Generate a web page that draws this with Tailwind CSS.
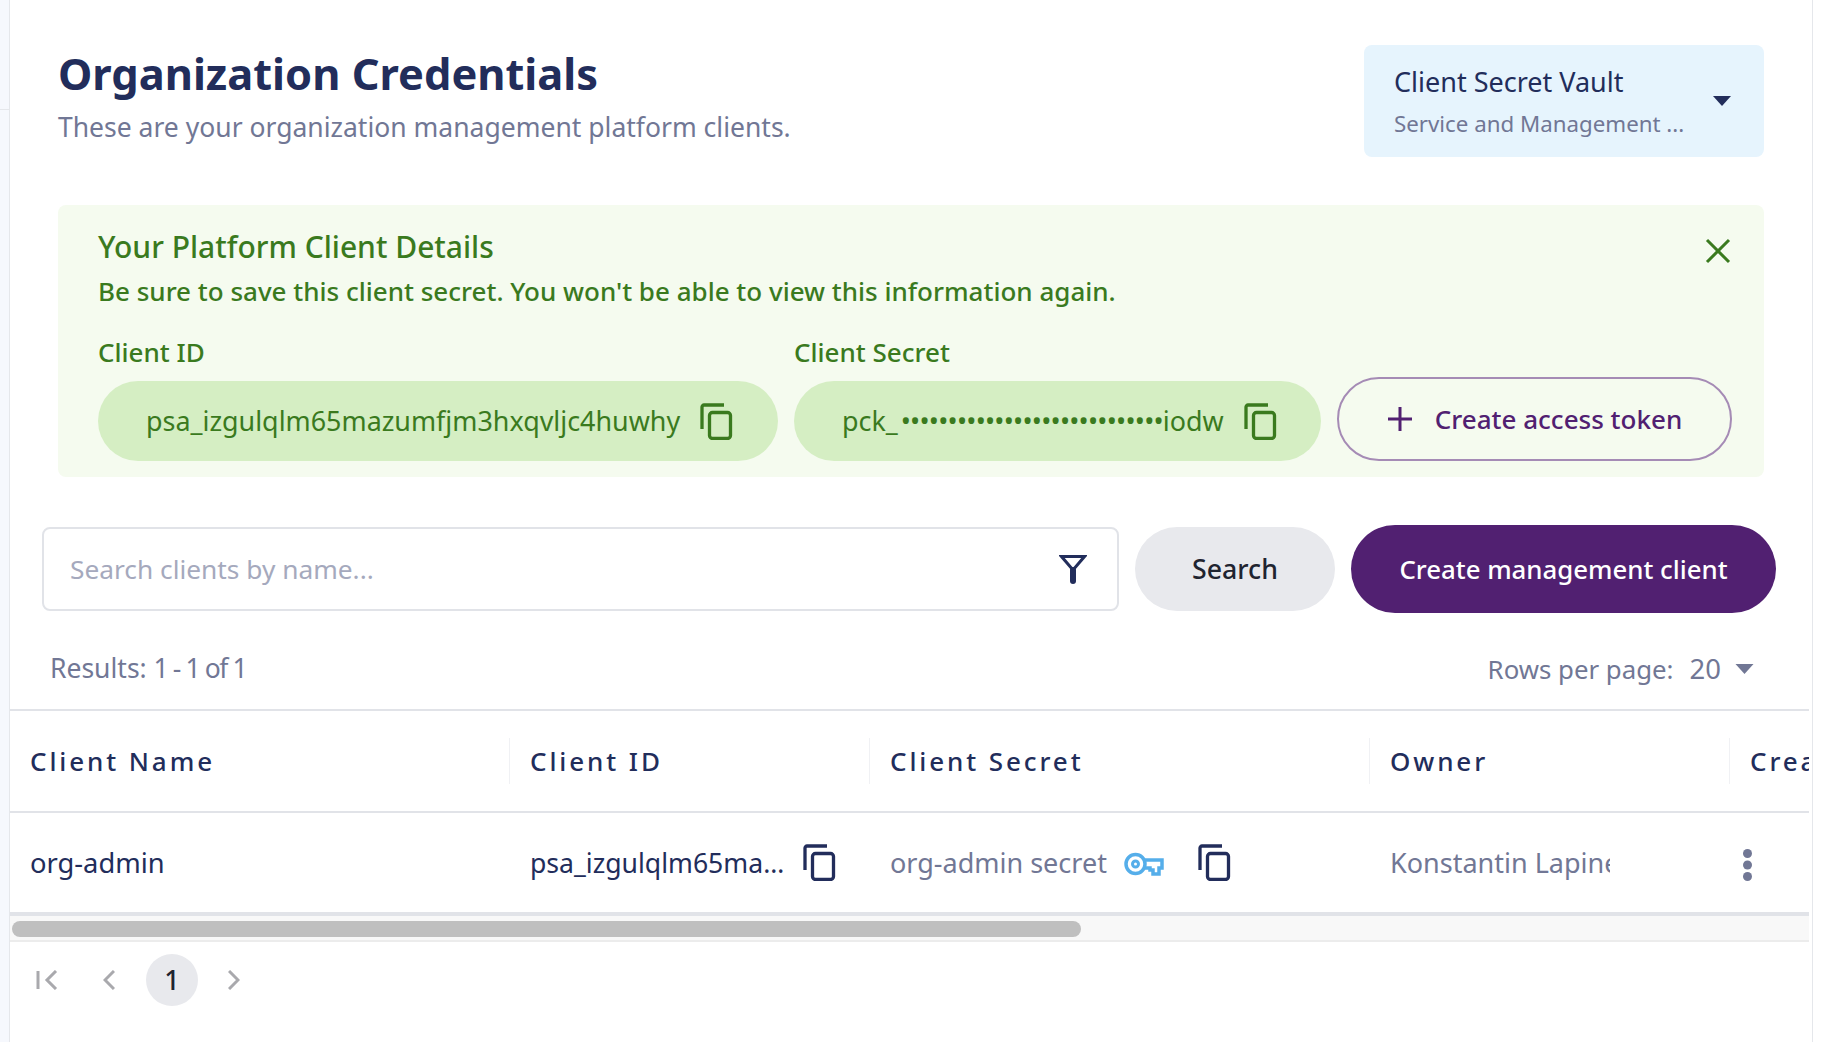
<!DOCTYPE html>
<html lang="en">
<head>
<meta charset="utf-8">
<title>Organization Credentials</title>
<script src="https://cdn.jsdelivr.net/npm/@tailwindcss/browser@4"></script>
</head>
<body class="m-0 bg-white">
<svg width="0" height="0" class="absolute">
  <defs>
    <g id="copy" fill="none" stroke="currentColor" stroke-width="3.300">
      <path d="M24 2H4a2 2 0 0 0-2 2v22"/>
      <rect x="9.500" y="9.500" width="21" height="26" rx="3"/>
    </g>
  </defs>
</svg>
<div class="flex w-[1822px] h-[1042px] overflow-hidden font-['Noto_Sans',sans-serif]">
  <aside class="w-[10px] shrink-0 bg-[#f6f8fd] border-r border-[#e5e7eb]">
    <div class="h-[110px] border-b border-[#e5e7eb]"></div>
  </aside>
  <main class="flex-1 min-w-0 flex flex-col">
    <div class="flex flex-col pl-[48px] pr-[48px] pt-[45px]">
      <header class="flex justify-between items-start h-[112px]">
        <div class="pt-[5px]">
          <h1 class="text-[43.400px] leading-[48px] font-bold text-[#222d5b]">Organization Credentials</h1>
          <p class="text-[26.500px] leading-[34px] mt-[12px] text-[#717795]">These are your organization management platform clients.</p>
        </div>
        <div class="w-[400px] h-[112px] rounded-lg bg-[#e6f4fd] pl-[30px] pr-[33px] flex items-center justify-between">
          <div class="pt-[2px]">
            <div class="text-[27px] leading-[34px] text-[#222d5b]">Client Secret Vault</div>
            <div class="text-[22.300px] leading-[30px] mt-[10px] text-[#717795]">Service and Management ...</div>
          </div>
          <svg width="18" height="10" viewBox="0 0 18 10" class="text-[#222d5b]"><path d="M0 0h18L9 10z" fill="currentColor"/></svg>
        </div>
      </header>
      <section class="relative mt-[48px] h-[272px] rounded-lg bg-[#f5fbef] pl-[40px] pr-[32px] pt-[23px] text-[#3a7a1e]">
        <h2 class="text-[30px] leading-[38px] font-medium">Your Platform Client Details</h2>
        <p class="text-[26px] leading-[34px] mt-[8px] font-medium">Be sure to save this client secret. You won't be able to view this information again.</p>
        <button class="absolute right-[33px] top-[33px] w-[26px] h-[26px]" aria-label="Close">
          <svg width="26" height="26" viewBox="0 0 26 26" fill="none" stroke="currentColor" stroke-width="3"><path d="M2 2l22 22M24 2L2 24"/></svg>
        </button>
        <div class="flex mt-[29px] items-end">
          <div class="w-[680px]">
            <div class="text-[26px] leading-[30px] font-medium">Client ID</div>
            <div class="mt-[14px] h-[80px] rounded-full bg-[#d5eec3] pl-[48px] flex items-center gap-[20px] text-[26.900px]">
              <span>psa_izgulqlm65mazumfjm3hxqvljc4huwhy</span>
              <svg width="33" height="37" viewBox="0 0 33 37"><use href="#copy"/></svg>
            </div>
          </div>
          <div class="w-[527px] ml-[16px]">
            <div class="text-[26px] leading-[30px] font-medium">Client Secret</div>
            <div class="mt-[14px] h-[80px] rounded-full bg-[#d5eec3] pl-[48px] flex items-center gap-[20px] text-[26.900px]">
              <span>pck_<span class="tracking-[-0.750px] ml-[3px]">••••••••••••••••••••••••••••</span>iodw</span>
              <svg width="33" height="37" viewBox="0 0 33 37"><use href="#copy"/></svg>
            </div>
          </div>
          <button class="ml-[16px] w-[395px] h-[84px] rounded-full border-2 border-[#a58bb5] flex items-center justify-center gap-[22px] text-[26px] font-medium text-[#512071]">
            <svg width="26" height="26" viewBox="0 0 26 26" fill="none" stroke="currentColor" stroke-width="3"><path d="M13 1v24M1 13h24"/></svg>
            Create access token
          </button>
        </div>
      </section>
    </div>
    <div class="flex items-center pl-[32px] pr-[36px] mt-[48px] h-[88px]">
      <div class="w-[1077px] h-[84px] rounded-lg border-2 border-[#e1e3e8] flex items-center justify-between pl-[26px] pr-[30px] text-[26.300px] text-[#a5a9bd]">
        <span class="pt-[2px]">Search clients by name...</span>
        <svg width="28" height="30" viewBox="0 0 28 30" fill="none" stroke="#222d5b"><path d="M2.500 2.500h23L14 16z" stroke-width="3" stroke-linejoin="miter"/><path d="M14 16v11" stroke-width="6" stroke-linecap="round"/></svg>
      </div>
      <button class="ml-[16px] w-[200px] h-[84px] rounded-full bg-[#e8e9ed] text-[26.700px] font-medium text-[#1f2430]">Search</button>
      <button class="ml-[16px] w-[425px] h-[88px] rounded-full bg-[#512071] text-[25.800px] font-medium text-white">Create management client</button>
    </div>
    <div class="flex justify-between items-center h-[96px] pt-[15px] pl-[40px] pr-[58px] text-[26.500px] text-[#717795]">
      <span>Results: <span class="tracking-[-1.400px]">1 - 1 of 1</span></span>
      <div class="flex items-center">
        <div class="flex items-baseline">
          <span class="text-[25.800px]">Rows per page:</span>
          <span class="ml-[16px] text-[27.500px]">20</span>
        </div>
        <svg width="19" height="10" viewBox="0 0 18 10" class="ml-[14px]"><path d="M0 0h18L9 10z" fill="currentColor"/></svg>
      </div>
    </div>
    <div class="mr-[3px] overflow-hidden border-t-2 border-[#e1e3e8]">
      <div class="flex h-[102px] items-center border-b-2 border-[#e1e3e8] w-[2400px] text-[26px] font-medium tracking-[2.900px] text-[#222d5b]">
        <div class="w-[500px] h-[46px] pl-[20px] flex items-center border-r border-[#f0f1f4]">Client Name</div>
        <div class="w-[360px] h-[46px] pl-[20px] flex items-center border-r border-[#f0f1f4]">Client ID</div>
        <div class="w-[500px] h-[46px] pl-[20px] flex items-center border-r border-[#f0f1f4]">Client Secret</div>
        <div class="w-[360px] h-[46px] pl-[20px] flex items-center border-r border-[#f0f1f4]">Owner</div>
        <div class="pl-[20px]">Created</div>
      </div>
      <div class="flex h-[103px] items-center w-[1799px] text-[27px] border-b-4 border-[#e1e3e8]">
        <div class="w-[500px] pl-[20px] pt-[2px] text-[#222d5b] text-[27.300px]">org-admin</div>
        <div class="w-[360px] pl-[20px] flex items-center text-[#222d5b]">
          <span class="w-[256px] pt-[2px] truncate text-[26.600px]">psa_izgulqlm65mazumfjm3hxqvljc4huwhy</span>
          <svg width="33" height="37" viewBox="0 0 33 37" class="ml-[17px] shrink-0"><use href="#copy"/></svg>
        </div>
        <div class="w-[500px] pl-[20px] flex items-center text-[#717795]">
          <span class="shrink-0 pt-[2px]">org-admin secret</span>
          <svg width="40" height="24" viewBox="0 0 40 24" fill="none" stroke="#55aeea" stroke-width="3.500" class="ml-[17px] mt-[3px] shrink-0"><circle cx="11.500" cy="12" r="9.500"/><circle cx="11.500" cy="12" r="3" stroke-width="3"/><path d="M21 8h17v8h-3v6h-6v-4h-3v-2h-5"/></svg>
          <svg width="33" height="37" viewBox="0 0 33 37" class="ml-[34px] shrink-0 text-[#222d5b]"><use href="#copy"/></svg>
        </div>
        <div class="w-[360px] pl-[20px] pt-[2px] text-[#717795]"><span class="block w-[220px] overflow-hidden whitespace-nowrap">Konstantin Lapine</span></div>
        <div class="w-[59px] flex justify-start pl-[13px] pt-[4px]">
          <svg width="9" height="32" viewBox="0 0 9 32" fill="#717795"><circle cx="4.500" cy="4.500" r="4.500"/><circle cx="4.500" cy="16" r="4.500"/><circle cx="4.500" cy="27.500" r="4.500"/></svg>
        </div>
      </div>
      <div class="h-[26px] bg-[#f8f8f8] border-b-2 border-[#ececec] pt-[5px] pl-[2px]">
        <div class="w-[1069px] h-[16px] rounded-full bg-[#bfbfbf]"></div>
      </div>
    </div>
    <nav class="flex items-center h-[52px] mt-[12px] pl-[26px] text-[#a9a9ad]">
      <svg width="22" height="20" viewBox="0 0 22 20" fill="none" stroke="currentColor" stroke-width="3"><path d="M2 1v18M20 1l-9 9 9 9"/></svg>
      <svg width="12" height="20" viewBox="0 0 12 20" fill="none" stroke="currentColor" stroke-width="3" class="ml-[45px]"><path d="M11 1l-9 9 9 9"/></svg>
      <span class="ml-[31px] w-[52px] h-[52px] rounded-full bg-[#e8e9ed] flex items-center justify-center text-[27px] font-medium text-[#1f2430]">1</span>
      <svg width="12" height="20" viewBox="0 0 12 20" fill="none" stroke="currentColor" stroke-width="3" class="ml-[30px]"><path d="M1 1l9 9-9 9"/></svg>
    </nav>
  </main>
  <aside class="w-[10px] shrink-0 border-l border-[#e5e7eb] bg-white"></aside>
</div>
</body>
</html>
